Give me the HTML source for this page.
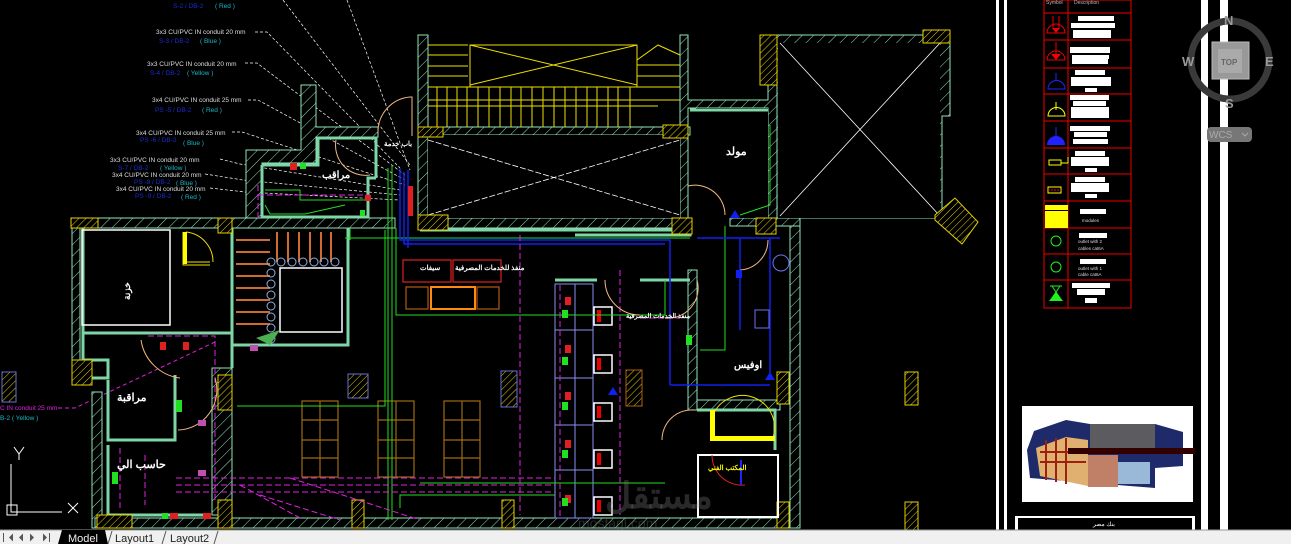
<!DOCTYPE html>
<html><head><meta charset="utf-8"><style>
html,body{margin:0;padding:0;background:#000;width:1291px;height:544px;overflow:hidden}
svg{display:block}
text{font-family:"Liberation Sans","Noto Sans CJK SC",sans-serif}
</style></head><body>
<svg width="1291" height="544" viewBox="0 0 1291 544" xmlns="http://www.w3.org/2000/svg">
<defs>
<pattern id="wh" width="8" height="8" patternUnits="userSpaceOnUse" patternTransform="rotate(45)"><rect width="8" height="8" fill="#000"/><line x1="0" y1="0" x2="0" y2="8" stroke="#8fe3b8" stroke-width="1"/></pattern>
<pattern id="yh" width="5" height="5" patternUnits="userSpaceOnUse" patternTransform="rotate(45)"><rect width="5" height="5" fill="#000"/><line x1="0" y1="0" x2="0" y2="5" stroke="#e6d200" stroke-width="1"/></pattern>
</defs>
<rect width="1291" height="544" fill="#000"/>

<!-- leader lines -->
<g stroke="#fff" stroke-width="0.7" stroke-dasharray="3,2" fill="none">
<path d="M283 0 L410 165"/><path d="M347 0 L410 170"/>
<path d="M255 32 L267 32 L400 168"/><path d="M245 63 L257 63 L405 175"/>
<path d="M248 100 L258 100 L405 180"/><path d="M232 132 L242 132 L405 185"/>
<path d="M220 159 L240 164 L400 190"/><path d="M205 174 L243 180 L400 195"/>
<path d="M210 188 L245 192 L400 200"/>
<path d="M428 138 L680 217"/>
</g>
<g font-size="6.5" fill="#ddd">
<text x="156" y="34">3x3 CU/PVC IN conduit 20 mm</text>
<text x="147" y="66">3x3 CU/PVC IN conduit 20 mm</text>
<text x="152" y="102">3x4 CU/PVC IN conduit 25 mm</text>
<text x="136" y="135">3x4 CU/PVC IN conduit 25 mm</text>
<text x="110" y="162">3x3 CU/PVC IN conduit 20 mm</text>
<text x="112" y="177">3x4 CU/PVC IN conduit 20 mm</text>
<text x="116" y="191">3x4 CU/PVC IN conduit 20 mm</text>
</g>
<g font-size="6.5" fill="#1a2bd0">
<text x="173" y="8">S-2 / DB-2</text><text x="159" y="43">S-3 / DB-2</text><text x="150" y="75">S-4 / DB-2</text>
<text x="155" y="112">PS -5 / DB-2</text><text x="140" y="142">PS -6 / DB-2</text><text x="118" y="170">S-7 / DB-2</text>
<text x="134" y="184">PS -8 / DB-2</text><text x="135" y="198">PS -9 / DB-2</text>
</g>
<g font-size="6.5" fill="#1ab8c8">
<text x="215" y="8">( Red )</text><text x="200" y="43">( Blue )</text><text x="187" y="75">( Yellow )</text>
<text x="202" y="112">( Red )</text><text x="183" y="145">( Blue )</text><text x="160" y="170">( Yellow )</text>
<text x="176" y="185">( Blue )</text><text x="181" y="199">( Red )</text>
<text x="0" y="420">B-2  ( Yellow )</text>
</g>
<text x="0" y="410" font-size="6.5" fill="#e020e0">C IN conduit 25 mm</text>
<path d="M58 408 L75 408 L215 342" stroke="#e020e0" stroke-dasharray="4,3" fill="none" stroke-width="1"/>

<!-- walls -->
<g fill="url(#wh)" stroke="#8fe3b8" stroke-width="1">
<path d="M72 218 L232 218 L232 228 L80 228 L80 360 L72 360 Z"/>
<path d="M92 392 L102 392 L102 528 L92 528 Z"/>
<path d="M246 150 L301 150 L301 85 L316 85 L316 127 L378 127 L378 137 L316 137 L316 163 L262 163 L262 218 L246 218 Z"/>
<path d="M232 218 L395 218 L395 228 L232 228 Z"/>
<path d="M418 35 L428 35 L428 218 L418 218 Z"/>
<path d="M428 127 L690 127 L690 135 L428 135 Z"/>
<path d="M680 35 L688 35 L688 100 L768 100 L768 35 L777 35 L777 218 L768 218 L768 108 L688 108 L688 218 L680 218 Z"/>
<path d="M777 35 L950 35 L950 116 L942 116 L942 210 L935 218 L800 218 L800 528 L790 528 L790 225 L777 225 Z"/>
<path d="M418 218 L690 218 L690 228 L418 228 Z"/>
<path d="M730 218 L800 218 L800 226 L730 226 Z"/>
<path d="M95 518 L790 518 L790 528 L95 528 Z"/>
<path d="M212 368 L232 368 L232 515 L212 515 Z" />
<path d="M688 270 L697 270 L697 410 L688 410 Z"/>
<path d="M697 400 L780 400 L780 410 L697 410 Z"/>
</g>
<rect x="778" y="43" width="162" height="175" fill="#000"/>
<rect x="428" y="135" width="252" height="83" fill="#000"/>
<rect x="696" y="108" width="72" height="110" fill="#000"/>
<path d="M780 43 L940 216 M940 43 L780 216" stroke="#fff" stroke-width="0.8"/>
<path d="M428 140 L680 215 M428 215 L680 140" stroke="#fff" stroke-width="0.8" stroke-dasharray="6,2"/>
<!-- thick inner walls -->
<g fill="none" stroke="#7ed6a6" stroke-width="3">
<path d="M262 165 L318 165 L318 138 L376 138 L376 178 M262 165 L262 217 L368 217 L368 178 L376 178"/>
<path d="M83 226 L83 360 L108 360 L108 378 L92 378"/>
<path d="M82 333 L232 333 L232 368"/>
<path d="M108 380 L108 440 L175 440 L175 375"/>
<path d="M108 445 L108 515 L210 515"/>
<path d="M690 110 L768 110"/>
<path d="M420 230 L690 230 L690 235 L575 235"/>
<path d="M232 228 L232 345 L348 345 L348 228"/>
<path d="M555 280 L597 280 M640 280 L690 280"/>
<path d="M697 410 L775 410 L775 450"/>
</g>
<!-- yellow columns -->
<g fill="url(#yh)" stroke="#e6d200" stroke-width="1">
<rect x="72" y="360" width="20" height="25"/><rect x="71" y="218" width="27" height="10"/><rect x="218" y="218" width="14" height="15"/>
<rect x="418" y="127" width="25" height="10"/><rect x="418" y="215" width="30" height="15"/>
<rect x="760" y="35" width="17" height="50"/><rect x="923" y="30" width="27" height="13"/>
<rect x="663" y="125" width="25" height="13"/><rect x="672" y="218" width="20" height="16"/><rect x="756" y="218" width="20" height="16"/>
<rect x="218" y="375" width="14" height="35"/><rect x="97" y="515" width="35" height="13"/><rect x="218" y="500" width="14" height="28"/>
<rect x="352" y="500" width="12" height="28"/><rect x="502" y="500" width="12" height="28"/>
<rect x="777" y="372" width="12" height="32"/><rect x="777" y="502" width="12" height="26"/>
<rect x="905" y="372" width="13" height="33"/><rect x="905" y="502" width="13" height="28"/>
<rect x="348" y="374" width="20" height="24" stroke="#6670d0"/><rect x="501" y="371" width="16" height="36" stroke="#6670d0"/>
<rect x="626" y="370" width="16" height="36" stroke="#b06010"/><rect x="2" y="372" width="14" height="30" stroke="#6670d0"/>
<path d="M935 215 L955 198 L978 222 L962 244 L935 220 Z"/>
</g>
<!-- upper stair yellow -->
<g stroke="#f0e000" fill="none" stroke-width="1">
<rect x="470" y="45" width="167" height="42"/>
<path d="M428 45 L468 45 M428 55 L468 55 M428 66 L468 66 M428 76 L468 76 M428 87 L680 87 M428 100 L680 100 M428 106 L658 106"/>
<path d="M470 45 L637 85 M470 85 L637 45"/>
<path d="M637 60 L658 45 L680 55 M637 65 L680 65 M637 76 L680 76"/>
<path d="M437 87V127 M447 87V127 M457 87V127 M467 87V127 M478 87V127 M489 87V127 M500 87V127 M511 87V127 M521 87V127 M532 87V127 M543 87V127 M554 87V127 M565 87V127 M576 87V127 M587 87V127 M597 87V127 M608 87V127 M618 87V127 M630 87V127"/>
<path d="M183 232 L183 265 L210 265 M186 232 L186 262 L210 262"/><path d="M186 232 A30 30 0 0 1 213 262"/>
<path d="M713 415 A30 30 0 0 1 772 440 L713 440 Z"/>
</g>
<rect x="710" y="410" width="5" height="30" fill="#ff0"/><rect x="710" y="436" width="65" height="5" fill="#ff0"/>
<rect x="183" y="232" width="4" height="32" fill="#ff0"/>
<!-- stair lower-left -->
<g stroke="#d06a30" stroke-width="2">
<path d="M236 240 L270 240 M236 252 L270 252 M236 264 L270 264 M236 276 L270 276 M236 288 L270 288 M236 300 L270 300 M236 312 L270 312 M236 324 L270 324"/>
<path d="M277 232V262 M288 232V262 M299 232V262 M310 232V262 M321 232V262 M331 232V262"/>
</g>
<rect x="280" y="268" width="62" height="64" fill="none" stroke="#fff" stroke-width="1.5"/>
<g fill="none" stroke="#8ab0e0" stroke-width="1">
<circle cx="271" cy="262" r="4"/><circle cx="281" cy="262" r="4"/><circle cx="292" cy="262" r="4"/><circle cx="303" cy="262" r="4"/><circle cx="314" cy="262" r="4"/><circle cx="324" cy="262" r="4"/><circle cx="335" cy="262" r="4"/>
<circle cx="271" cy="273" r="4"/><circle cx="271" cy="284" r="4"/><circle cx="271" cy="295" r="4"/><circle cx="271" cy="306" r="4"/><circle cx="271" cy="317" r="4"/><circle cx="271" cy="328" r="4"/><circle cx="271" cy="339" r="4"/>
</g>
<path d="M256 338 L280 330 L270 345 Z" fill="#4cb050"/>
<rect x="82" y="230" width="88" height="95" fill="none" stroke="#fff" stroke-width="1.5"/>
<!-- restroom column -->
<g fill="none" stroke="#8a90f0" stroke-width="1">
<rect x="555" y="284" width="20" height="234"/><rect x="575" y="284" width="18" height="234"/>
<path d="M555 330H593 M555 378H593 M555 425H593 M555 470H593"/>
</g>
<g fill="#000" stroke="#fff" stroke-width="1.5">
<rect x="594" y="307" width="18" height="18"/><rect x="594" y="355" width="18" height="18"/><rect x="594" y="403" width="18" height="18"/><rect x="594" y="450" width="18" height="18"/><rect x="594" y="497" width="18" height="18"/>
</g>
<g fill="#e00"><rect x="597" y="310" width="4" height="12"/><rect x="597" y="358" width="4" height="12"/><rect x="597" y="406" width="4" height="12"/><rect x="597" y="453" width="4" height="12"/><rect x="597" y="500" width="4" height="12"/></g>
<!-- furniture -->
<g fill="none" stroke="#a06a10" stroke-width="1.2">
<rect x="302" y="401" width="36" height="76"/><path d="M320 401V477 M302 420H338 M302 440H338 M302 458H338"/>
<rect x="378" y="401" width="36" height="76"/><path d="M396 401V477 M378 420H414 M378 440H414 M378 458H414"/>
<rect x="444" y="401" width="36" height="76"/><path d="M462 401V477 M444 420H480 M444 440H480 M444 458H480"/>
<rect x="406" y="287" width="22" height="22" stroke="#b05a10"/><rect x="477" y="287" width="22" height="22" stroke="#b05a10"/>
</g>
<rect x="431" y="287" width="44" height="22" fill="none" stroke="#ff8a10" stroke-width="2"/>
<g fill="none" stroke="#e02020" stroke-width="1.2"><rect x="403" y="260" width="48" height="22"/><rect x="453" y="260" width="48" height="22"/></g>
<!-- wiring -->
<g fill="none" stroke="#20e020" stroke-width="1">
<path d="M388 168 L388 520 M392 165 L392 520 M396 228 L396 315 L665 315 L665 280"/>
<path d="M345 238 L690 238 M350 240 L350 228 M237 406 L385 406 L385 230"/>
<path d="M420 483 L665 483 M400 508 L400 495 L555 495"/>
<path d="M725 226 L725 350 L700 350 M740 215 L770 205 L770 125"/>
<path d="M265 190 L300 190 L300 200 L370 200 M265 205 L270 214 L305 214 L345 205"/>
</g>
<g fill="none" stroke="#1020f0" stroke-width="1.5">
<path d="M400 168 L400 240 L670 240 L670 385 M404 172 L404 244 L665 244 M408 170 L408 248"/>
<path d="M697 238 L780 238 M740 238 L740 330 M770 238 L770 380 M670 385 L770 385"/>
</g>
<g fill="none" stroke="#e020e0" stroke-width="1" stroke-dasharray="6,3">
<path d="M258 195 L370 195 M258 185 L258 218"/>
<path d="M176 478 L555 478 M176 485 L555 485 M176 492 L555 492 M148 336 L215 336 L215 500"/>
<path d="M520 235 L520 515 M620 270 L620 515 M560 285 L560 518 M640 318 L680 318"/>
<path d="M240 485 L300 518 M260 495 L340 520 M290 478 L420 520"/>
<path d="M120 448 L120 510 M145 455 L145 505"/>
</g>
<g fill="none" stroke="#f5b880" stroke-width="1">
<path d="M141 340 A45 45 0 0 0 180 378"/><path d="M215 378 A40 40 0 0 1 178 430"/>
<path d="M605 280 A35 35 0 0 0 640 315"/><path d="M697 280 A30 30 0 0 1 665 318"/>
<path d="M695 410 A30 30 0 0 0 662 440"/><path d="M768 240 A30 30 0 0 1 740 270"/>
<path d="M410 97 A35 35 0 0 0 378 132 M410 97 L412 97 L412 136 M336 140 A30 30 0 0 0 370 175"/><path d="M688 186 A30 30 0 0 1 725 215"/>
</g>
<rect x="698" y="455" width="80" height="62" fill="none" stroke="#fff" stroke-width="2"/>
<path d="M712 455 A30 30 0 0 0 745 485" stroke="#e02020" fill="none"/>
<rect x="740" y="460" width="2" height="25" fill="#22f"/>
<!-- fixtures -->
<g fill="#e02020"><rect x="290" y="163" width="7" height="7"/><rect x="365" y="195" width="6" height="6"/><rect x="160" y="342" width="6" height="8"/><rect x="183" y="342" width="6" height="8"/><rect x="565" y="297" width="6" height="8"/><rect x="565" y="345" width="6" height="8"/><rect x="565" y="392" width="6" height="8"/><rect x="565" y="440" width="6" height="8"/><rect x="565" y="495" width="6" height="8"/><rect x="170" y="513" width="8" height="6"/><rect x="203" y="513" width="8" height="6"/><rect x="408" y="186" width="5" height="30"/></g>
<g fill="#20e020"><rect x="300" y="163" width="6" height="6"/><rect x="562" y="310" width="6" height="8"/><rect x="562" y="357" width="6" height="8"/><rect x="562" y="402" width="6" height="8"/><rect x="562" y="450" width="6" height="8"/><rect x="562" y="498" width="6" height="8"/><rect x="686" y="335" width="6" height="10"/><rect x="176" y="400" width="6" height="12"/><rect x="112" y="472" width="6" height="12"/><rect x="162" y="513" width="6" height="6"/><rect x="360" y="210" width="5" height="6"/></g>
<g fill="#1020f0"><path d="M608 395 l5 -8 5 8z"/><path d="M730 218 l5 -8 5 8z"/><path d="M765 380 l5 -8 5 8z"/><rect x="736" y="270" width="6" height="8"/></g>
<g fill="#c050b0"><rect x="250" y="345" width="8" height="6"/><rect x="198" y="420" width="8" height="6"/><rect x="198" y="470" width="8" height="6"/></g>
<circle cx="781" cy="263" r="8" fill="none" stroke="#7070f0"/>
<rect x="755" y="310" width="14" height="18" fill="none" stroke="#7070f0"/>
<!-- arabic labels -->
<g fill="#fff" font-weight="bold">
<text x="726" y="155" font-size="11">مولد</text>
<text x="322" y="178" font-size="10">مراقب</text>
<text x="117" y="401" font-size="11">مراقبة</text>
<text x="117" y="468" font-size="11">حاسب الي</text>
<text x="734" y="368" font-size="10">اوفيس</text>
<text x="420" y="270" font-size="7">سيفات</text>
<text x="455" y="270" font-size="7">منفذ للخدمات المصرفية</text>
<text x="626" y="318" font-size="6.5">منفذ الخدمات المصرفية</text>
<text x="384" y="146" font-size="7">باب خدمة</text>
<text x="130" y="300" font-size="9" transform="rotate(-90 130 300)">خزنة</text>
<text x="708" y="470" font-size="7" fill="#ff0">المكتب الفني</text>
</g>
<text x="605" y="508" font-size="36" fill="#888" fill-opacity="0.3" font-weight="bold">مستقل</text>
<text x="578" y="528" font-size="14" fill="#888" fill-opacity="0.3">mostaql.com</text>

<!-- UCS icon -->
<g stroke="#fff" stroke-width="1" fill="none">
<path d="M11 464 L11 512 L62 512"/><rect x="7" y="505" width="10" height="10"/>
<path d="M14 447 L19 454 L24 447 M19 454 L19 460 M68 503 L78 513 M78 503 L68 513"/>
</g>

<rect x="996" y="0" width="3" height="530" fill="#fff"/><rect x="1004" y="0" width="3" height="530" fill="#fff"/>
<rect x="1201" y="0" width="7" height="530" fill="#fff"/><rect x="1220" y="0" width="8" height="530" fill="#fff"/>
<!-- legend -->
<g stroke="#e00" stroke-width="1" fill="none">
<rect x="1044" y="0" width="87" height="308"/><line x1="1068" y1="0" x2="1068" y2="308"/>
<path d="M1044 13H1131 M1044 40H1131 M1044 68H1131 M1044 94H1131 M1044 121H1131 M1044 148H1131 M1044 174H1131 M1044 201H1131 M1044 228H1131 M1044 254H1131 M1044 280H1131"/>
</g>
<text x="1046" y="4" font-size="5" fill="#bbb">Symbol</text><text x="1074" y="4" font-size="5" fill="#bbb">Description</text>
<g fill="#fff">
<rect x="1078" y="16" width="36" height="5"/><rect x="1071" y="23" width="44" height="5"/><rect x="1073" y="30" width="38" height="8"/>
<rect x="1070" y="47" width="40" height="6"/><rect x="1072" y="55" width="37" height="4"/><rect x="1072" y="59" width="36" height="5"/>
<rect x="1075" y="70" width="30" height="5"/><rect x="1071" y="77" width="40" height="9"/><rect x="1085" y="88" width="12" height="4"/>
<rect x="1070" y="95" width="39" height="5"/><rect x="1073" y="101" width="33" height="5"/><rect x="1071" y="107" width="38" height="11"/>
<rect x="1070" y="126" width="40" height="5"/><rect x="1074" y="132" width="33" height="5"/><rect x="1073" y="139" width="35" height="5"/>
<rect x="1075" y="151" width="30" height="5"/><rect x="1071" y="157" width="38" height="9"/><rect x="1085" y="168" width="12" height="4"/>
<rect x="1075" y="177" width="30" height="5"/><rect x="1071" y="183" width="38" height="9"/><rect x="1085" y="194" width="12" height="4"/>
<rect x="1080" y="209" width="26" height="5"/><rect x="1079" y="233" width="28" height="5"/><rect x="1080" y="259" width="26" height="5"/>
<rect x="1072" y="283" width="38" height="5"/><rect x="1077" y="289" width="28" height="6"/><rect x="1085" y="298" width="12" height="5"/>
</g>
<g font-size="4.5" fill="#ddd"><text x="1082" y="222">modules</text><text x="1078" y="243">outlet with 2</text><text x="1078" y="250">cables cat6A</text><text x="1078" y="270">outlet with 1</text><text x="1078" y="276">cable cat6A</text></g>
<g>
<path d="M1047 33 A9 9 0 0 1 1065 33 Z" fill="none" stroke="#e00"/><path d="M1052 28 L1060 28 L1056 33 Z" fill="#e00"/><path d="M1053 16V28 M1059 16V28" stroke="#e00"/>
<path d="M1047 60 A9 9 0 0 1 1065 60 Z" fill="none" stroke="#e00"/><path d="M1051 54 L1061 54 L1056 60 Z" fill="#e00"/><path d="M1056 42V54" stroke="#e00"/>
<path d="M1048 89 A8 8 0 0 1 1065 89 Z" fill="none" stroke="#22f"/><path d="M1056 73V81" stroke="#22f"/>
<path d="M1048 116 A8 8 0 0 1 1065 116 Z" fill="none" stroke="#ff0"/><path d="M1056 102V110" stroke="#ff0"/>
<path d="M1047 145 A9 9 0 0 1 1065 145 Z" fill="#22f"/><path d="M1056 127V137" stroke="#22f"/>
<rect x="1049" y="160" width="12" height="5" fill="none" stroke="#ff0"/><path d="M1061 163 L1068 163 L1068 157" stroke="#ff0" fill="none"/>
<rect x="1048" y="187" width="13" height="6" fill="none" stroke="#ff0"/><path d="M1048 190 H1061" stroke="#e00" stroke-dasharray="2,1"/>
<rect x="1045" y="205" width="23" height="23" fill="#ff0"/><rect x="1045" y="210" width="23" height="1" fill="#000"/>
<circle cx="1056" cy="241" r="5" fill="none" stroke="#2e2"/><circle cx="1056" cy="267" r="5" fill="none" stroke="#2e2"/>
<path d="M1049 301 L1063 301 L1056 292 Z" fill="#2e2"/><path d="M1050 286 L1062 286 M1052 286 L1060 298 M1060 286 L1052 298" stroke="#2e2"/>
</g>
<!-- viewcube -->
<circle cx="1230" cy="60" r="39" fill="none" stroke="#3a3a3a" stroke-width="7"/>
<rect x="1212" y="42" width="37" height="37" fill="#999" stroke="#bbb"/>
<rect x="1218" y="49" width="24" height="24" fill="#aaa"/>
<g fill="#999" font-weight="bold" font-size="13"><text x="1224" y="25">N</text><text x="1182" y="66">W</text><text x="1265" y="66">E</text><text x="1225" y="108">S</text></g>
<text x="1221" y="65" font-size="8" fill="#666" font-weight="bold">TOP</text>
<rect x="1207" y="127" width="45" height="15" rx="4" fill="#777"/>
<text x="1209" y="138" font-size="10" fill="#aaa">WCS</text><path d="M1242 133 l3 3 3 -3" stroke="#aaa" fill="none"/>
<!-- thumbnail -->
<rect x="1022" y="406" width="171" height="96" fill="#fff"/>
<path d="M1027 450 L1034 431 L1066 420 L1090 424 L1155 424 L1183 432 L1183 466 L1155 468 L1155 488 L1030 478 Z" fill="#1e2a6a"/>
<path d="M1090 424 L1155 424 L1155 452 L1090 452 Z" fill="#5c5c60"/>
<path d="M1036 448 L1066 437 L1088 440 L1088 486 L1040 476 Z" fill="#e0b070"/>
<path d="M1040 452 H1086 M1040 462 H1086 M1046 440 V480 M1056 438 V482 M1066 438 V484" stroke="#a02010" stroke-width="2"/>
<rect x="1088" y="455" width="30" height="32" fill="#c08068"/>
<rect x="1118" y="462" width="32" height="22" fill="#9ab8d8"/>
<rect x="1068" y="448" width="127" height="6" fill="#300"/>
<rect x="1015" y="516" width="180" height="14" fill="#fff"/><rect x="1018" y="518" width="174" height="12" fill="#000"/>
<text x="1093" y="526" font-size="6" fill="#fff">بنك مصر</text>

<!-- tab bar -->
<rect x="0" y="530" width="1291" height="14" fill="#f0f0f0"/>
<line x1="0" y1="530" x2="1291" y2="530" stroke="#999"/>
<g fill="#555"><path d="M3 533v9h1v-9z M9 537.5l4 -4v8z"/><path d="M19 537.5l4 -4v8z"/><path d="M30 533.5l4 4 -4 4z"/><path d="M43 533.5l4 4 -4 4z M49 533v9h1v-9z"/></g>
<path d="M58 544 L62 530 L105 530 L108 544 Z" fill="#000"/>
<text x="68" y="542" font-size="11" fill="#eee">Model</text>
<path d="M108 544 L112 531" stroke="#555"/><text x="115" y="542" font-size="11" fill="#222">Layout1</text>
<path d="M162 544 L166 531" stroke="#555"/><text x="170" y="542" font-size="11" fill="#222">Layout2</text>
<path d="M214 544 L218 531" stroke="#555"/>
</svg>
</body></html>
